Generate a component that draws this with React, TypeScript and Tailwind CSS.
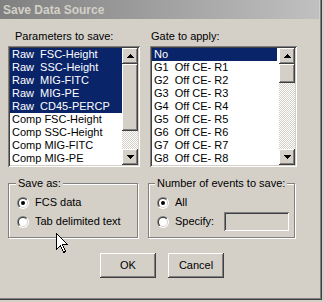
import React from "react";

const raised =
  "shadow-[inset_-1px_-1px_#404040,inset_1px_1px_#ffffff,inset_-2px_-2px_#808080,inset_2px_2px_#d4d0c8]";
const sunken =
  "shadow-[inset_1px_1px_#808080,inset_-1px_-1px_#ffffff,inset_2px_2px_#404040,inset_-2px_-2px_#d4d0c8]";
const checker =
  "bg-[repeating-conic-gradient(#ffffff_0%_25%,#d4d0c8_0%_50%)] bg-[length:2px_2px]";

function ArrowBtn({ dir }: { dir: "up" | "down" }) {
  return (
    <div className={`w-4 h-4 bg-[#d4d0c8] ${raised} flex items-center justify-center`}>
      <svg width="7" height="4" viewBox="0 0 7 4">
        {dir === "up" ? (
          <path d="M3 0h1v1h1v1h1v1h1v1H0V3h1V2h1V1h1z" fill="#000" />
        ) : (
          <path d="M0 0h7v1H6v1H5v1H4v1H3V3H2V2H1V1H0z" fill="#000" />
        )}
      </svg>
    </div>
  );
}

function ScrollBar({ thumbClass }: { thumbClass: string }) {
  return (
    <div className="w-4 h-full flex flex-col">
      <ArrowBtn dir="up" />
      <div className={`flex-1 flex flex-col ${checker}`}>
        <div className={`bg-[#d4d0c8] ${raised} ${thumbClass}`} />
      </div>
      <ArrowBtn dir="down" />
    </div>
  );
}

function Row({ text, sel }: { text: string; sel?: boolean }) {
  return (
    <div
      className={`h-[13px] leading-[13px] pl-[2px] whitespace-pre ${
        sel ? "bg-[#0a246a] text-white" : "text-black"
      }`}
    >
      {text}
    </div>
  );
}

function Radio({ checked }: { checked?: boolean }) {
  return (
    <div className="w-3 h-3 rounded-full p-px bg-[linear-gradient(135deg,#808080_50%,#ffffff_50%)]">
      <div className="w-full h-full rounded-full p-px bg-[linear-gradient(135deg,#404040_50%,#d4d0c8_50%)]">
        <div className="w-full h-full rounded-full bg-white flex items-center justify-center">
          {checked && <div className="w-1 h-1 rounded-full bg-black" />}
        </div>
      </div>
    </div>
  );
}

const params: [string, boolean][] = [
  ["Raw  FSC-Height", true],
  ["Raw  SSC-Height", true],
  ["Raw  MIG-FITC", true],
  ["Raw  MIG-PE", true],
  ["Raw  CD45-PERCP", true],
  ["Comp FSC-Height", false],
  ["Comp SSC-Height", false],
  ["Comp MIG-FITC", false],
  ["Comp MIG-PE", false],
];

const gates: [string, boolean][] = [
  ["No", true],
  ["G1  Off CE- R1", false],
  ["G2  Off CE- R2", false],
  ["G3  Off CE- R3", false],
  ["G4  Off CE- R4", false],
  ["G5  Off CE- R5", false],
  ["G6  Off CE- R6", false],
  ["G7  Off CE- R7", false],
  ["G8  Off CE- R8", false],
];

export default function App() {
  return (
    <div
      className="relative w-[324px] h-[302px] bg-[#d4d0c8] overflow-hidden text-[11px] text-black"
      style={{ fontFamily: '"Liberation Sans", Arial, sans-serif' }}
    >
      <div className="w-[322px] h-[300px] flex flex-col shadow-[inset_-1px_-1px_#404040,inset_-2px_-2px_#808080]">
        {/* Title bar */}
        <div className="h-[19px] mr-[3px] flex items-center pl-[3px] bg-[linear-gradient(90deg,#808080,#c0c0c0)]">
          <span className="text-[12px] font-bold text-[#d4d0c8] leading-none">Save Data Source</span>
        </div>

        {/* Lists */}
        <div className="flex pl-[8px] mt-[11px] gap-[10px]">
          <div className="flex flex-col w-[132px]">
            <div className="pl-[7px] h-[13px] leading-[13px]">Parameters to save:</div>
            <div className={`mt-[3px] h-[121px] p-[2px] bg-white flex ${sunken}`}>
              <div className="flex-1 flex flex-col bg-white">
                {params.map(([t, s]) => (
                  <Row key={t} text={t} sel={s} />
                ))}
              </div>
              <ScrollBar thumbClass="h-[67px]" />
            </div>
          </div>
          <div className="flex flex-col w-[147px]">
            <div className="pl-[1px] h-[13px] leading-[13px]">Gate to apply:</div>
            <div className={`mt-[3px] h-[121px] p-[2px] bg-white flex ${sunken}`}>
              <div className="flex-1 flex flex-col bg-white pr-[2px]">
                {gates.map(([t, s]) => (
                  <Row key={t} text={t} sel={s} />
                ))}
              </div>
              <ScrollBar thumbClass="h-[19px]" />
            </div>
          </div>
        </div>

        {/* Group boxes */}
        <div className="flex pl-[8px] mt-[16px] gap-[10px]">
          <div className="relative w-[130px] h-[55px] border border-[#808080] shadow-[1px_1px_0_#ffffff,inset_1px_1px_0_#ffffff]">
            <span className="absolute -top-[7px] left-[7px] px-[2px] bg-[#d4d0c8] leading-[13px]">
              Save as:
            </span>
            <div className="flex flex-col pl-[8px] pt-[12px] gap-[6px]">
              <div className="flex items-center gap-[6px] h-[13px]">
                <Radio checked />
                <span className="leading-[13px]">FCS data</span>
              </div>
              <div className="flex items-center gap-[6px] h-[13px]">
                <Radio />
                <span className="leading-[13px]">Tab delimited text</span>
              </div>
            </div>
          </div>
          <div className="relative w-[147px] h-[55px] border border-[#808080] shadow-[1px_1px_0_#ffffff,inset_1px_1px_0_#ffffff]">
            <span className="absolute -top-[7px] left-[6px] px-[2px] bg-[#d4d0c8] leading-[13px]">
              Number of events to save:
            </span>
            <div className="flex flex-col pl-[8px] pt-[12px] gap-[6px]">
              <div className="flex items-center gap-[6px] h-[13px]">
                <Radio checked />
                <span className="leading-[13px]">All</span>
              </div>
              <div className="flex items-center h-[13px]">
                <Radio />
                <span className="leading-[13px] ml-[6px]">Specify:</span>
                <div className={`ml-[10px] w-[65px] h-[19px] bg-[#d4d0c8] ${sunken}`} />
              </div>
            </div>
          </div>
        </div>

        {/* Buttons */}
        <div className="flex pl-[100px] mt-[15px] gap-[12px]">
          <div className={`w-[56px] h-[25px] flex items-center justify-center bg-[#d4d0c8] ${raised}`}>
            OK
          </div>
          <div className={`w-[56px] h-[25px] flex items-center justify-center bg-[#d4d0c8] ${raised}`}>
            Cancel
          </div>
        </div>
      </div>

      {/* Mouse cursor */}
      <svg
        className="absolute left-[56px] top-[233px]"
        width="13"
        height="21"
        viewBox="0 0 13 21"
      >
        <path
          d="M0.5 0.5 L0.5 16.5 L4.5 12.5 L7.5 19.5 L9.5 18.5 L6.5 11.5 L11.5 11.5 Z"
          fill="#ffffff"
          stroke="#000000"
          strokeWidth="1"
          shapeRendering="crispEdges"
        />
      </svg>
    </div>
  );
}
